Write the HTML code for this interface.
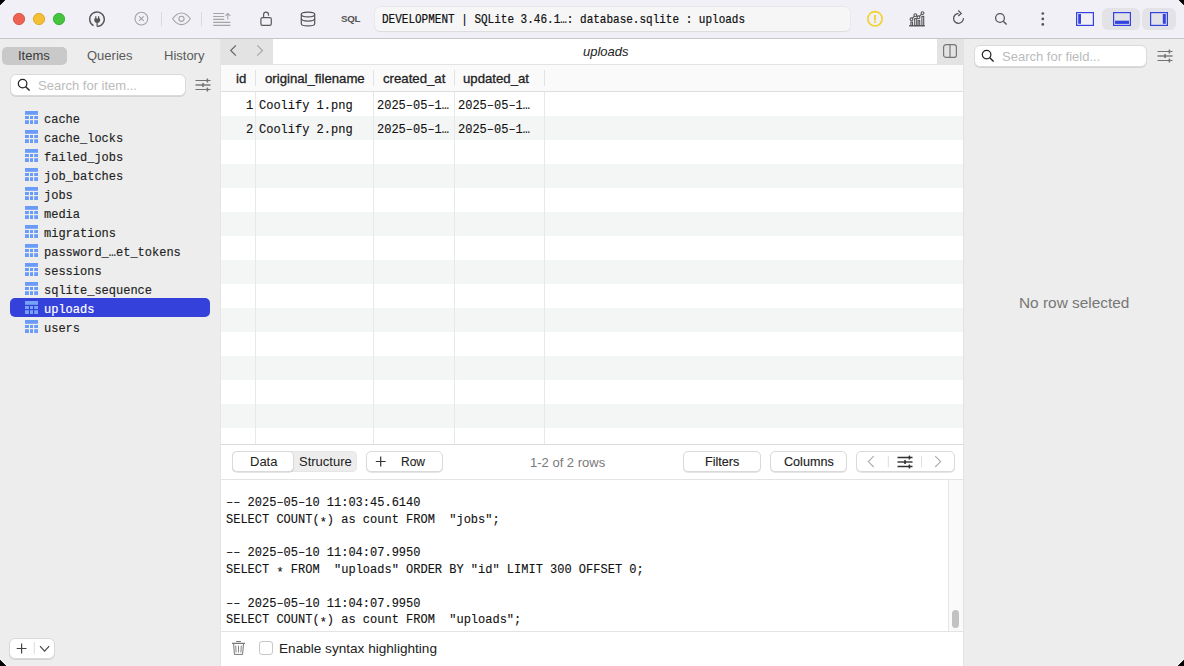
<!DOCTYPE html><html><head><meta charset="utf-8"><style>
*{box-sizing:border-box;margin:0;padding:0}
html,body{width:1184px;height:666px;overflow:hidden;background:#000}
body{font-family:"Liberation Sans",sans-serif;position:relative;color:#222}
.a{position:absolute}
.t{white-space:pre;line-height:1}
.m{font-family:"Liberation Mono",monospace}
#win{position:absolute;left:0;top:0;width:1184px;height:666px;background:#EDEDED;overflow:hidden}
.btn{position:absolute;background:#fff;border:1px solid #D9D9D9;border-radius:5px;box-shadow:0 1px 0.5px rgba(0,0,0,.10)}
.search{position:absolute;background:#fff;border:1px solid #DADADA;border-radius:6px;box-shadow:0 1px 0.5px rgba(0,0,0,.10)}
</style></head><body><div id="win">
<div class="a" style="left:0px;top:0px;width:1184px;height:38px;background:#F1F0F6"></div>
<div class="a" style="left:0px;top:38px;width:1184px;height:1px;background:#C6C6C8"></div>
<svg class="a" style="left:12px;top:12px" width="14" height="14" viewBox="0 0 14 14"><circle cx="7" cy="7" r="5.65" fill="#EE6254" stroke="#D04A3C" stroke-width="0.8"/></svg>
<svg class="a" style="left:32px;top:12px" width="14" height="14" viewBox="0 0 14 14"><circle cx="7" cy="7" r="5.65" fill="#F4BF35" stroke="#D6A023" stroke-width="0.8"/></svg>
<svg class="a" style="left:52px;top:12px" width="14" height="14" viewBox="0 0 14 14"><circle cx="7" cy="7" r="5.65" fill="#46C43E" stroke="#2DA42B" stroke-width="0.8"/></svg>
<svg class="a" style="left:85px;top:7px" width="24" height="24" viewBox="0 0 24 24"><path d="M8.57 18.7 A7.3 7.3 0 1 1 12.25 19.55" fill="none" stroke="#555" stroke-width="1.4"/><rect x="10.2" y="9.2" width="1.2" height="3" fill="#555"/><rect x="13" y="9.2" width="1.2" height="3" fill="#555"/><path d="M9.3 11.6 H15.1 V13.2 C15.1 14.8 13.9 15.9 12.2 15.9 C10.5 15.9 9.3 14.8 9.3 13.2 Z" fill="#555"/><path d="M12.1 15.5 V19.6" stroke="#555" stroke-width="1.2"/></svg>
<svg class="a" style="left:130px;top:7px" width="24" height="24" viewBox="0 0 24 24"><circle cx="11.4" cy="11.6" r="6.4" fill="none" stroke="#A3A3A3" stroke-width="1.1"/><path d="M9.1 9.3 L13.7 13.9 M13.7 9.3 L9.1 13.9" stroke="#A3A3A3" stroke-width="1.1"/></svg>
<div class="a" style="left:161px;top:12px;width:1px;height:14px;background:#DADADE"></div>
<svg class="a" style="left:170px;top:7px" width="24" height="24" viewBox="0 0 24 24"><path d="M2.6 11.8 C5.5 7.6 8.5 6 11.5 6 C14.5 6 17.5 7.6 20.4 11.8 C17.5 16 14.5 17.6 11.5 17.6 C8.5 17.6 5.5 16 2.6 11.8Z" fill="none" stroke="#A3A3A3" stroke-width="1.1"/><circle cx="11.5" cy="11.8" r="2.6" fill="none" stroke="#A3A3A3" stroke-width="1.1"/></svg>
<div class="a" style="left:201px;top:12px;width:1px;height:14px;background:#DADADE"></div>
<svg class="a" style="left:210px;top:7px" width="24" height="24" viewBox="0 0 24 24"><path d="M3.2 6.5 H14.2 M3.2 9.5 H14.2 M3.2 12.4 H14.2 M3.2 15.4 H20.4 M3.2 18.4 H20.4 M17.8 12.6 V6.6 M15.5 8.8 L17.8 6.4 L20.4 8.8" fill="none" stroke="#A5A5A5" stroke-width="1.1"/></svg>
<svg class="a" style="left:254px;top:7px" width="24" height="24" viewBox="0 0 24 24"><rect x="6.9" y="10.7" width="10.4" height="7.6" rx="1.6" fill="none" stroke="#5A5A5A" stroke-width="1.2"/><path d="M9.6 10.7 V7.6 A2.45 2.45 0 0 1 14.5 7.6 V8.7" fill="none" stroke="#5A5A5A" stroke-width="1.2"/></svg>
<svg class="a" style="left:296px;top:7px" width="24" height="24" viewBox="0 0 24 24"><path d="M5.3 7.2 C5.3 5.9 8.3 5.1 12 5.1 C15.7 5.1 18.7 5.9 18.7 7.2 V16.8 C18.7 18.1 15.7 18.9 12 18.9 C8.3 18.9 5.3 18.1 5.3 16.8 Z" fill="none" stroke="#555" stroke-width="1.2"/><path d="M5.3 7.2 C5.3 8.8 8.3 9.8 12 9.8 C15.7 9.8 18.7 8.8 18.7 7.2 M5.3 11.6 C5.3 13.2 8.3 14.1 12 14.1 C15.7 14.1 18.7 13.2 18.7 11.6" fill="none" stroke="#555" stroke-width="1.2"/></svg>
<div class="a t" style="left:341px;top:14px;font-size:9.8px;font-weight:bold;color:#555;letter-spacing:-0.3px">SQL</div>
<div class="a" style="left:375px;top:7px;width:474.5px;height:23.5px;background:#F6F6F7;border-radius:5px;box-shadow:0 0 0 0.5px #E3E3E6, 0 0.5px 1px rgba(0,0,0,.12)"></div>
<div class="a t" style="left:382px;top:15px;font-family:'Liberation Mono',monospace;font-size:11px;color:#111;-webkit-text-stroke:0.2px #111;transform:scaleY(1.1);transform-origin:0 8px">DEVELOPMENT | SQLite 3.46.1…: database.sqlite : uploads</div>
<svg class="a" style="left:863px;top:7px" width="24" height="24" viewBox="0 0 24 24"><circle cx="12" cy="11.8" r="7.2" fill="none" stroke="#F2D12B" stroke-width="1.6"/><rect x="11.1" y="7.9" width="1.8" height="5.6" fill="#F2D12B"/><rect x="11.1" y="14.2" width="1.8" height="1.7" fill="#F2D12B"/></svg>
<svg class="a" style="left:905px;top:7px" width="24" height="24" viewBox="0 0 24 24"><path d="M4.1 18.7 H19.8" stroke="#555" stroke-width="1.3"/><rect x="5.9" y="15.1" width="1.6" height="3.6" fill="none" stroke="#555" stroke-width="1.1"/><rect x="9.7" y="11.6" width="2" height="7.1" fill="none" stroke="#555" stroke-width="1.1"/><rect x="13.1" y="13.6" width="1.6" height="5.1" fill="none" stroke="#555" stroke-width="1.1"/><rect x="16.9" y="9.4" width="1.8" height="9.3" fill="none" stroke="#555" stroke-width="1.1"/><path d="M6.5 12.3 L10.3 8.1 L13.5 10.3 L17.5 6.1" fill="none" stroke="#555" stroke-width="1.1"/><circle cx="6.5" cy="12.3" r="1.4" fill="#F1F0F6" stroke="#555" stroke-width="1.1"/><circle cx="10.3" cy="8.1" r="1.4" fill="#F1F0F6" stroke="#555" stroke-width="1.1"/><circle cx="13.5" cy="10.3" r="1.4" fill="#F1F0F6" stroke="#555" stroke-width="1.1"/><circle cx="17.5" cy="6.1" r="1.4" fill="#F1F0F6" stroke="#555" stroke-width="1.1"/></svg>
<svg class="a" style="left:946px;top:7px" width="24" height="24" viewBox="0 0 24 24"><path d="M12.5 6.5 A4.9 4.9 0 1 0 17.4 11.1" fill="none" stroke="#555" stroke-width="1.3"/><path d="M12.3 3.5 L15.2 6.4 L12.3 9.1" fill="none" stroke="#555" stroke-width="1.3"/></svg>
<svg class="a" style="left:989px;top:7px" width="24" height="24" viewBox="0 0 24 24"><circle cx="11" cy="11" r="4.4" fill="none" stroke="#555" stroke-width="1.3"/><path d="M14.3 14.3 L17.6 17.6" stroke="#555" stroke-width="1.4"/></svg>
<svg class="a" style="left:1030px;top:7px" width="24" height="24" viewBox="0 0 24 24"><circle cx="12.8" cy="6.5" r="1.35" fill="#555"/><circle cx="12.8" cy="11.9" r="1.35" fill="#555"/><circle cx="12.8" cy="17.4" r="1.35" fill="#555"/></svg>
<div class="a" style="left:1102px;top:8px;width:38px;height:22px;background:#E3E3E7;border-radius:6px"></div>
<div class="a" style="left:1142px;top:8px;width:34px;height:22px;background:#E3E3E7;border-radius:6px"></div>
<svg class="a" style="left:1076px;top:12px" width="18" height="14" viewBox="0 0 18 14"><rect x="0.6" y="0.6" width="16.8" height="12.8" fill="none" stroke="#3442E0" stroke-width="1.2"/><rect x="2.2" y="2" width="2.8" height="9.8" fill="#3442E0"/></svg>
<svg class="a" style="left:1113px;top:12px" width="18" height="14" viewBox="0 0 18 14"><rect x="0.6" y="0.6" width="16.8" height="12.8" fill="none" stroke="#3442E0" stroke-width="1.2"/><rect x="2" y="8.7" width="14" height="3.2" fill="#3442E0"/></svg>
<svg class="a" style="left:1150px;top:12px" width="18" height="14" viewBox="0 0 18 14"><rect x="0.6" y="0.6" width="16.8" height="12.8" fill="none" stroke="#3442E0" stroke-width="1.2"/><rect x="12.8" y="2" width="3" height="9.8" fill="#3442E0"/></svg>
<div class="a" style="left:0px;top:39px;width:220px;height:627px;background:#EDEDED"></div>
<div class="a" style="left:220px;top:39px;width:1px;height:627px;background:#E5E5E5"></div>
<div class="a" style="left:2px;top:47px;width:65px;height:18px;background:#C9C9C9;border-radius:5px"></div>
<div class="a t" style="left:18px;top:49px;font-size:13px;color:#3A3A3A">Items</div>
<div class="a t" style="left:87px;top:49px;font-size:13px;color:#5A5A5A">Queries</div>
<div class="a t" style="left:164px;top:49px;font-size:13px;color:#5A5A5A">History</div>
<div class="search" style="left:10px;top:74px;width:176px;height:22px"></div>
<svg class="a" style="left:17px;top:78px" width="14" height="14" viewBox="0 0 14 14"><circle cx="5.6" cy="5.6" r="4.3" fill="none" stroke="#222" stroke-width="1.2"/><path d="M8.7 8.7 L12.6 12.6" stroke="#222" stroke-width="1.4"/></svg>
<div class="a t" style="left:38px;top:79px;font-size:13px;color:#BBBBBB">Search for item...</div>
<svg class="a" style="left:195px;top:78px" width="16" height="14" viewBox="0 0 16 14"><path d="M0.5 2.5 H15.5 M0.5 11.5 H15.5" stroke="#737373" stroke-width="1.2"/><path d="M0.5 7 H15.5" stroke="#737373" stroke-width="1.4"/><rect x="11.6" y="0.4" width="1.6" height="4.2" rx="0.6" fill="#737373"/><rect x="7.2" y="4.9" width="1.7" height="4.2" rx="0.6" fill="#737373"/><rect x="11.6" y="9.4" width="1.6" height="4.2" rx="0.6" fill="#737373"/></svg>
<svg class="a" style="left:25px;top:111px" width="13" height="13" viewBox="0 0 13 13"><g fill="#6A9BF8"><rect x="0" y="0" width="13" height="3.8"/><rect x="0" y="5" width="3.9" height="3"/><rect x="5" y="5" width="3" height="3"/><rect x="9.2" y="5" width="3.8" height="3"/><rect x="0" y="9.2" width="3.9" height="3.8"/><rect x="5" y="9.2" width="3" height="3.8"/><rect x="9.2" y="9.2" width="3.8" height="3.8"/></g></svg>
<div class="a t" style="left:44px;top:114px;font-family:'Liberation Mono',monospace;font-size:12px;color:#222;-webkit-text-stroke:0.15px #222">cache</div>
<svg class="a" style="left:25px;top:130px" width="13" height="13" viewBox="0 0 13 13"><g fill="#6A9BF8"><rect x="0" y="0" width="13" height="3.8"/><rect x="0" y="5" width="3.9" height="3"/><rect x="5" y="5" width="3" height="3"/><rect x="9.2" y="5" width="3.8" height="3"/><rect x="0" y="9.2" width="3.9" height="3.8"/><rect x="5" y="9.2" width="3" height="3.8"/><rect x="9.2" y="9.2" width="3.8" height="3.8"/></g></svg>
<div class="a t" style="left:44px;top:133px;font-family:'Liberation Mono',monospace;font-size:12px;color:#222;-webkit-text-stroke:0.15px #222">cache_locks</div>
<svg class="a" style="left:25px;top:149px" width="13" height="13" viewBox="0 0 13 13"><g fill="#6A9BF8"><rect x="0" y="0" width="13" height="3.8"/><rect x="0" y="5" width="3.9" height="3"/><rect x="5" y="5" width="3" height="3"/><rect x="9.2" y="5" width="3.8" height="3"/><rect x="0" y="9.2" width="3.9" height="3.8"/><rect x="5" y="9.2" width="3" height="3.8"/><rect x="9.2" y="9.2" width="3.8" height="3.8"/></g></svg>
<div class="a t" style="left:44px;top:152px;font-family:'Liberation Mono',monospace;font-size:12px;color:#222;-webkit-text-stroke:0.15px #222">failed_jobs</div>
<svg class="a" style="left:25px;top:168px" width="13" height="13" viewBox="0 0 13 13"><g fill="#6A9BF8"><rect x="0" y="0" width="13" height="3.8"/><rect x="0" y="5" width="3.9" height="3"/><rect x="5" y="5" width="3" height="3"/><rect x="9.2" y="5" width="3.8" height="3"/><rect x="0" y="9.2" width="3.9" height="3.8"/><rect x="5" y="9.2" width="3" height="3.8"/><rect x="9.2" y="9.2" width="3.8" height="3.8"/></g></svg>
<div class="a t" style="left:44px;top:171px;font-family:'Liberation Mono',monospace;font-size:12px;color:#222;-webkit-text-stroke:0.15px #222">job_batches</div>
<svg class="a" style="left:25px;top:187px" width="13" height="13" viewBox="0 0 13 13"><g fill="#6A9BF8"><rect x="0" y="0" width="13" height="3.8"/><rect x="0" y="5" width="3.9" height="3"/><rect x="5" y="5" width="3" height="3"/><rect x="9.2" y="5" width="3.8" height="3"/><rect x="0" y="9.2" width="3.9" height="3.8"/><rect x="5" y="9.2" width="3" height="3.8"/><rect x="9.2" y="9.2" width="3.8" height="3.8"/></g></svg>
<div class="a t" style="left:44px;top:190px;font-family:'Liberation Mono',monospace;font-size:12px;color:#222;-webkit-text-stroke:0.15px #222">jobs</div>
<svg class="a" style="left:25px;top:206px" width="13" height="13" viewBox="0 0 13 13"><g fill="#6A9BF8"><rect x="0" y="0" width="13" height="3.8"/><rect x="0" y="5" width="3.9" height="3"/><rect x="5" y="5" width="3" height="3"/><rect x="9.2" y="5" width="3.8" height="3"/><rect x="0" y="9.2" width="3.9" height="3.8"/><rect x="5" y="9.2" width="3" height="3.8"/><rect x="9.2" y="9.2" width="3.8" height="3.8"/></g></svg>
<div class="a t" style="left:44px;top:209px;font-family:'Liberation Mono',monospace;font-size:12px;color:#222;-webkit-text-stroke:0.15px #222">media</div>
<svg class="a" style="left:25px;top:225px" width="13" height="13" viewBox="0 0 13 13"><g fill="#6A9BF8"><rect x="0" y="0" width="13" height="3.8"/><rect x="0" y="5" width="3.9" height="3"/><rect x="5" y="5" width="3" height="3"/><rect x="9.2" y="5" width="3.8" height="3"/><rect x="0" y="9.2" width="3.9" height="3.8"/><rect x="5" y="9.2" width="3" height="3.8"/><rect x="9.2" y="9.2" width="3.8" height="3.8"/></g></svg>
<div class="a t" style="left:44px;top:228px;font-family:'Liberation Mono',monospace;font-size:12px;color:#222;-webkit-text-stroke:0.15px #222">migrations</div>
<svg class="a" style="left:25px;top:244px" width="13" height="13" viewBox="0 0 13 13"><g fill="#6A9BF8"><rect x="0" y="0" width="13" height="3.8"/><rect x="0" y="5" width="3.9" height="3"/><rect x="5" y="5" width="3" height="3"/><rect x="9.2" y="5" width="3.8" height="3"/><rect x="0" y="9.2" width="3.9" height="3.8"/><rect x="5" y="9.2" width="3" height="3.8"/><rect x="9.2" y="9.2" width="3.8" height="3.8"/></g></svg>
<div class="a t" style="left:44px;top:247px;font-family:'Liberation Mono',monospace;font-size:12px;color:#222;-webkit-text-stroke:0.15px #222">password_…et_tokens</div>
<svg class="a" style="left:25px;top:263px" width="13" height="13" viewBox="0 0 13 13"><g fill="#6A9BF8"><rect x="0" y="0" width="13" height="3.8"/><rect x="0" y="5" width="3.9" height="3"/><rect x="5" y="5" width="3" height="3"/><rect x="9.2" y="5" width="3.8" height="3"/><rect x="0" y="9.2" width="3.9" height="3.8"/><rect x="5" y="9.2" width="3" height="3.8"/><rect x="9.2" y="9.2" width="3.8" height="3.8"/></g></svg>
<div class="a t" style="left:44px;top:266px;font-family:'Liberation Mono',monospace;font-size:12px;color:#222;-webkit-text-stroke:0.15px #222">sessions</div>
<svg class="a" style="left:25px;top:282px" width="13" height="13" viewBox="0 0 13 13"><g fill="#6A9BF8"><rect x="0" y="0" width="13" height="3.8"/><rect x="0" y="5" width="3.9" height="3"/><rect x="5" y="5" width="3" height="3"/><rect x="9.2" y="5" width="3.8" height="3"/><rect x="0" y="9.2" width="3.9" height="3.8"/><rect x="5" y="9.2" width="3" height="3.8"/><rect x="9.2" y="9.2" width="3.8" height="3.8"/></g></svg>
<div class="a t" style="left:44px;top:285px;font-family:'Liberation Mono',monospace;font-size:12px;color:#222;-webkit-text-stroke:0.15px #222">sqlite_sequence</div>
<div class="a" style="left:10px;top:298px;width:200px;height:19px;background:#3441DA;border-radius:5px"></div>
<svg class="a" style="left:25px;top:301px" width="13" height="13" viewBox="0 0 13 13"><g fill="#76A3F9"><rect x="0" y="0" width="13" height="3.8"/><rect x="0" y="5" width="3.9" height="3"/><rect x="5" y="5" width="3" height="3"/><rect x="9.2" y="5" width="3.8" height="3"/><rect x="0" y="9.2" width="3.9" height="3.8"/><rect x="5" y="9.2" width="3" height="3.8"/><rect x="9.2" y="9.2" width="3.8" height="3.8"/></g></svg>
<div class="a t" style="left:44px;top:304px;font-family:'Liberation Mono',monospace;font-size:12px;color:#fff;-webkit-text-stroke:0.2px #fff">uploads</div>
<svg class="a" style="left:25px;top:320px" width="13" height="13" viewBox="0 0 13 13"><g fill="#6A9BF8"><rect x="0" y="0" width="13" height="3.8"/><rect x="0" y="5" width="3.9" height="3"/><rect x="5" y="5" width="3" height="3"/><rect x="9.2" y="5" width="3.8" height="3"/><rect x="0" y="9.2" width="3.9" height="3.8"/><rect x="5" y="9.2" width="3" height="3.8"/><rect x="9.2" y="9.2" width="3.8" height="3.8"/></g></svg>
<div class="a t" style="left:44px;top:323px;font-family:'Liberation Mono',monospace;font-size:12px;color:#222;-webkit-text-stroke:0.15px #222">users</div>
<div class="btn" style="left:9px;top:638px;width:46px;height:21px;border-radius:6px"></div>
<svg class="a" style="left:9px;top:638px" width="46" height="21" viewBox="0 0 46 21"><path d="M7.7 10.5 H17.5 M12.6 5.6 V15.4" stroke="#444" stroke-width="1.2"/><path d="M25.3 4 V16" stroke="#DDD" stroke-width="1"/><path d="M31 8.2 L35.6 13.1 L40.2 8.2" fill="none" stroke="#444" stroke-width="1.2"/></svg>
<div class="a" style="left:221px;top:39px;width:742px;height:627px;background:#fff"></div>
<div class="a" style="left:221px;top:39px;width:52px;height:26px;background:#E3E3E3"></div>
<div class="a" style="left:937px;top:39px;width:26px;height:26px;background:#E3E3E3"></div>
<div class="a" style="left:221px;top:64px;width:742px;height:1px;background:#E3E3E3"></div>
<svg class="a" style="left:221px;top:39px" width="51" height="26" viewBox="0 0 51 26"><path d="M14.9 6.3 L9.7 11.5 L14.9 16.7" stroke="#666" stroke-width="1.2" fill="none"/><path d="M36.3 6.3 L41.5 11.5 L36.3 16.7" stroke="#A8A8A8" stroke-width="1.2" fill="none"/></svg>
<svg class="a" style="left:943px;top:44px" width="14" height="14" viewBox="0 0 14 14"><rect x="0.6" y="0.6" width="12.8" height="12.8" rx="2.5" stroke="#777" stroke-width="1.2" fill="none"/><line x1="7" y1="0.6" x2="7" y2="13.4" stroke="#777" stroke-width="1.2"/></svg>
<div class="a t" style="left:583px;top:45px;font-size:13px;font-style:italic;color:#222">uploads</div>
<div class="a" style="left:221px;top:65px;width:742px;height:26px;background:#FAFAFA"></div>
<div class="a" style="left:221px;top:91px;width:742px;height:1px;background:#DEDEDE"></div>
<div class="a" style="left:221px;top:116px;width:742px;height:24px;background:#F4F5F5"></div>
<div class="a" style="left:221px;top:164px;width:742px;height:24px;background:#F4F5F5"></div>
<div class="a" style="left:221px;top:212px;width:742px;height:24px;background:#F4F5F5"></div>
<div class="a" style="left:221px;top:260px;width:742px;height:24px;background:#F4F5F5"></div>
<div class="a" style="left:221px;top:308px;width:742px;height:24px;background:#F4F5F5"></div>
<div class="a" style="left:221px;top:356px;width:742px;height:24px;background:#F4F5F5"></div>
<div class="a" style="left:221px;top:404px;width:742px;height:24px;background:#F4F5F5"></div>
<div class="a" style="left:255px;top:70px;width:1px;height:16px;background:#E2E2E2"></div>
<div class="a" style="left:255px;top:92px;width:1px;height:352px;background:#E8E8E8"></div>
<div class="a" style="left:373px;top:70px;width:1px;height:16px;background:#E2E2E2"></div>
<div class="a" style="left:373px;top:92px;width:1px;height:352px;background:#E8E8E8"></div>
<div class="a" style="left:454px;top:70px;width:1px;height:16px;background:#E2E2E2"></div>
<div class="a" style="left:454px;top:92px;width:1px;height:352px;background:#E8E8E8"></div>
<div class="a" style="left:544px;top:70px;width:1px;height:16px;background:#E2E2E2"></div>
<div class="a" style="left:544px;top:92px;width:1px;height:352px;background:#E8E8E8"></div>
<div class="a t" style="left:236px;top:72px;font-size:13.2px;color:#222;-webkit-text-stroke:0.3px #222">id</div>
<div class="a t" style="left:265px;top:72px;font-size:13.2px;color:#222;-webkit-text-stroke:0.3px #222">original_filename</div>
<div class="a t" style="left:383px;top:72px;font-size:13.2px;color:#222;-webkit-text-stroke:0.3px #222">created_at</div>
<div class="a t" style="left:463px;top:72px;font-size:13.2px;color:#222;-webkit-text-stroke:0.3px #222">updated_at</div>
<div class="a t" style="left:246px;top:100px;font-family:'Liberation Mono',monospace;font-size:12px;color:#111;-webkit-text-stroke:0.12px #111">1</div>
<div class="a t" style="left:259px;top:100px;font-family:'Liberation Mono',monospace;font-size:12px;color:#111;-webkit-text-stroke:0.12px #111">Coolify 1.png</div>
<div class="a t" style="left:377px;top:100px;font-family:'Liberation Mono',monospace;font-size:12px;color:#111;-webkit-text-stroke:0.12px #111">2025–05–1…</div>
<div class="a t" style="left:458px;top:100px;font-family:'Liberation Mono',monospace;font-size:12px;color:#111;-webkit-text-stroke:0.12px #111">2025–05–1…</div>
<div class="a t" style="left:246px;top:124px;font-family:'Liberation Mono',monospace;font-size:12px;color:#111;-webkit-text-stroke:0.12px #111">2</div>
<div class="a t" style="left:259px;top:124px;font-family:'Liberation Mono',monospace;font-size:12px;color:#111;-webkit-text-stroke:0.12px #111">Coolify 2.png</div>
<div class="a t" style="left:377px;top:124px;font-family:'Liberation Mono',monospace;font-size:12px;color:#111;-webkit-text-stroke:0.12px #111">2025–05–1…</div>
<div class="a t" style="left:458px;top:124px;font-family:'Liberation Mono',monospace;font-size:12px;color:#111;-webkit-text-stroke:0.12px #111">2025–05–1…</div>
<div class="a" style="left:221px;top:444px;width:742px;height:1px;background:#DCDCDC"></div>
<div class="a" style="left:232px;top:451px;width:125px;height:21px;background:#EDEDED;border-radius:5px;box-shadow:inset 0 0 0 0.5px #E0E0E0"></div>
<div class="btn" style="left:232px;top:451px;width:62px;height:21px"></div>
<div class="a t" style="left:250px;top:455px;font-size:13px;color:#222">Data</div>
<div class="a t" style="left:299px;top:455px;font-size:13px;color:#222">Structure</div>
<div class="btn" style="left:366px;top:451px;width:77px;height:21px"></div>
<svg class="a" style="left:366px;top:451px" width="77" height="21" viewBox="0 0 77 21"><path d="M9.8 10.5 H19.6 M14.7 5.6 V15.4" stroke="#333" stroke-width="1.2"/></svg>
<div class="a t" style="left:401px;top:456px;font-size:12px;color:#222;-webkit-text-stroke:0.1px #222">Row</div>
<div class="a t" style="left:530px;top:456px;font-size:13px;color:#7A7A7A">1-2 of 2 rows</div>
<div class="btn" style="left:683px;top:451px;width:77.5px;height:21px"></div>
<div class="a t" style="left:705px;top:456px;font-size:12.6px;color:#222;-webkit-text-stroke:0.15px #222">Filters</div>
<div class="btn" style="left:769.5px;top:451px;width:77.5px;height:21px"></div>
<div class="a t" style="left:784px;top:456px;font-size:12.6px;color:#222;-webkit-text-stroke:0.15px #222">Columns</div>
<div class="btn" style="left:855.5px;top:451px;width:99px;height:21px"></div>
<svg class="a" style="left:855px;top:451px" width="99" height="21" viewBox="0 0 99 21"><path d="M18.7 5.2 L13.3 10.6 L18.7 16" fill="none" stroke="#ABABAB" stroke-width="1.1"/><path d="M33.3 5 V16.5 M66.6 5 V16.5" stroke="#DDDDDD" stroke-width="1"/><path d="M80.2 5.2 L85.6 10.6 L80.2 16" fill="none" stroke="#ABABAB" stroke-width="1.1"/></svg>
<svg class="a" style="left:897px;top:455px" width="16" height="14" viewBox="0 0 16 14"><path d="M0.5 2.5 H15.5 M0.5 11.5 H15.5" stroke="#333" stroke-width="1.5"/><path d="M0.5 7 H15.5" stroke="#333" stroke-width="1.4"/><rect x="11.6" y="0.4" width="1.6" height="4.2" rx="0.6" fill="#333"/><rect x="7.2" y="4.9" width="1.7" height="4.2" rx="0.6" fill="#333"/><rect x="11.6" y="9.4" width="1.6" height="4.2" rx="0.6" fill="#333"/></svg>
<div class="a" style="left:221px;top:479px;width:742px;height:1px;background:#E3E3E3"></div>
<div class="a" style="left:226px;top:495px;font-family:'Liberation Mono',monospace;font-size:12px;line-height:16.75px;color:#111;white-space:pre;-webkit-text-stroke:0.12px #111">–– 2025–05–10 11:03:45.6140
SELECT COUNT(<span style="display:inline-block;transform:translateY(2.5px)">*</span>) as count FROM  &quot;jobs&quot;;

–– 2025–05–10 11:04:07.9950
SELECT <span style="display:inline-block;transform:translateY(2.5px)">*</span> FROM  &quot;uploads&quot; ORDER BY &quot;id&quot; LIMIT 300 OFFSET 0;

–– 2025–05–10 11:04:07.9950
SELECT COUNT(<span style="display:inline-block;transform:translateY(2.5px)">*</span>) as count FROM  &quot;uploads&quot;;</div>
<div class="a" style="left:948px;top:480px;width:15px;height:151px;background:#FAFAFA;border-left:1px solid #E6E6E6"></div>
<div class="a" style="left:952px;top:610px;width:7px;height:18px;background:#C2C2C2;border-radius:4px"></div>
<div class="a" style="left:221px;top:631px;width:742px;height:1px;background:#E3E3E3"></div>
<svg class="a" style="left:230px;top:638px" width="18" height="18" viewBox="0 0 18 18"><path d="M6.1 3.5 H10.9 M2 5.4 H15" stroke="#777" stroke-width="1.1" fill="none"/><path d="M3.6 5.4 L4.4 16.4 H12.6 L13.5 5.4" fill="none" stroke="#777" stroke-width="1"/><path d="M5.7 7.6 L6.1 14.5 M8.5 7.6 V14.5 M11.3 7.6 L10.9 14.5" stroke="#777" stroke-width="0.9"/></svg>
<div class="a" style="left:259px;top:641px;width:14px;height:14px;background:#fff;border:1px solid #C8C8C8;border-radius:3px"></div>
<div class="a t" style="left:279px;top:642px;font-size:13.6px;color:#222">Enable syntax highlighting</div>
<div class="a" style="left:963px;top:39px;width:1px;height:627px;background:#E3E3E3"></div>
<div class="a" style="left:964px;top:39px;width:220px;height:627px;background:#EDEDED"></div>
<div class="search" style="left:974px;top:45px;width:173px;height:22px"></div>
<svg class="a" style="left:981px;top:49px" width="14" height="14" viewBox="0 0 14 14"><circle cx="5.6" cy="5.6" r="4.3" fill="none" stroke="#222" stroke-width="1.2"/><path d="M8.7 8.7 L12.6 12.6" stroke="#222" stroke-width="1.4"/></svg>
<div class="a t" style="left:1002px;top:50px;font-size:13px;color:#BBBBBB">Search for field...</div>
<svg class="a" style="left:1157px;top:49px" width="16" height="14" viewBox="0 0 16 14"><path d="M0.5 2.5 H15.5 M0.5 11.5 H15.5" stroke="#737373" stroke-width="1.2"/><path d="M0.5 7 H15.5" stroke="#737373" stroke-width="1.4"/><rect x="11.6" y="0.4" width="1.6" height="4.2" rx="0.6" fill="#737373"/><rect x="7.2" y="4.9" width="1.7" height="4.2" rx="0.6" fill="#737373"/><rect x="11.6" y="9.4" width="1.6" height="4.2" rx="0.6" fill="#737373"/></svg>
<div class="a t" style="left:1019px;top:295px;font-size:15.4px;color:#777">No row selected</div>
</div>
<svg class="a" style="left:0;top:0" width="1184" height="666" viewBox="0 0 1184 666"><path d="M0 0 H5.5 L0 5.5Z M1184 0 H1178.5 L1184 5.5Z M0 666 V659.5 L6.5 666Z M1184 666 V659.5 L1177.5 666Z" fill="#000"/><path d="M6 0 L0 6 M1178 0 L1184 6 M0 659 L7 666 M1184 659 L1177 666" stroke="#fff" stroke-width="1" opacity="0.7"/></svg>
</body></html>
